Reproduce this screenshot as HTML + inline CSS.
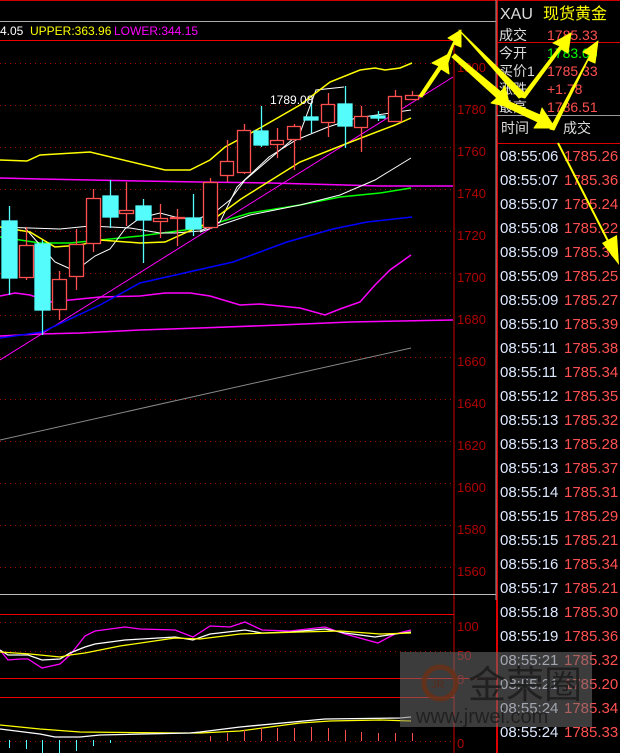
<!DOCTYPE html>
<html><head><meta charset="utf-8"><style>
html,body{margin:0;padding:0;background:#000;width:620px;height:753px;overflow:hidden}
svg{display:block}
text{font-family:"Liberation Sans","Noto Sans CJK SC",sans-serif}
</style></head><body>
<svg width="620" height="753" viewBox="0 0 620 753" xmlns="http://www.w3.org/2000/svg">
<rect width="620" height="753" fill="#000"/>
<line x1="0" y1="0.5" x2="620" y2="0.5" stroke="#c00" stroke-width="1"/>
<line x1="0" y1="21.5" x2="497" y2="21.5" stroke="#aaa" stroke-width="1"/>
<line x1="0" y1="40.5" x2="454" y2="40.5" stroke="#e00" stroke-width="1"/>
<line x1="454" y1="40" x2="454" y2="753" stroke="#c00" stroke-width="1"/>
<line x1="0" y1="594.5" x2="497" y2="594.5" stroke="#bbb" stroke-width="1"/>
<line x1="0" y1="614.5" x2="454" y2="614.5" stroke="#e00"/>
<line x1="0" y1="678.5" x2="497" y2="678.5" stroke="#e00"/>
<line x1="0" y1="697.5" x2="454" y2="697.5" stroke="#e00"/>
<line x1="497" y1="0" x2="497" y2="753" stroke="#d00" stroke-width="2"/>
<line x1="496" y1="0" x2="496" y2="600" stroke="#999" stroke-width="1"/>
<text x="0" y="35" font-size="12" fill="#fff">4.05</text>
<text x="30" y="35" font-size="12" fill="#ff0">UPPER:363.96</text>
<text x="114" y="35" font-size="12" fill="#f0f">LOWER:344.15</text>
<g stroke="#a00" stroke-dasharray="1,4" stroke-width="1">
<line x1="0" y1="63.5" x2="454" y2="63.5"/><line x1="0" y1="105.5" x2="454" y2="105.5"/>
<line x1="0" y1="147.5" x2="454" y2="147.5"/><line x1="0" y1="189.5" x2="454" y2="189.5"/>
<line x1="0" y1="231.5" x2="454" y2="231.5"/><line x1="0" y1="273.5" x2="454" y2="273.5"/>
<line x1="0" y1="315.5" x2="454" y2="315.5"/><line x1="0" y1="357.5" x2="454" y2="357.5"/>
<line x1="0" y1="399.5" x2="454" y2="399.5"/><line x1="0" y1="441.5" x2="454" y2="441.5"/>
<line x1="0" y1="483.5" x2="454" y2="483.5"/><line x1="0" y1="525.5" x2="454" y2="525.5"/>
<line x1="0" y1="567.5" x2="454" y2="567.5"/>
<line x1="0" y1="622.5" x2="454" y2="622.5"/><line x1="0" y1="651.5" x2="454" y2="651.5"/>
<line x1="0" y1="741.5" x2="454" y2="741.5"/>
</g>
<g font-size="13" fill="#b00000">
<text x="457" y="72">1800</text><text x="457" y="114">1780</text><text x="457" y="156">1760</text>
<text x="457" y="198">1740</text><text x="457" y="240">1720</text><text x="457" y="282">1700</text>
<text x="457" y="324">1680</text><text x="457" y="366">1660</text><text x="457" y="408">1640</text>
<text x="457" y="450">1620</text><text x="457" y="492">1600</text><text x="457" y="534">1580</text>
<text x="457" y="576">1560</text>
<text x="457" y="631">100</text><text x="457" y="660">50</text><text x="457" y="684">0</text><text x="457" y="748">0</text>
</g>
<g fill="none" stroke-width="1">
<polyline stroke="#888" points="0,440 411,348"/>
<polyline stroke="#f0f" points="0,360 453,77"/>
<polyline stroke="#f0f" stroke-width="1.5" points="0,336 40,334 80,333 140,330 200,328 280,325 350,322 453,320"/>
<polyline stroke="#f0f" stroke-width="1.5" points="0,178 40,179 140,181 200,182 270,183 345,185 380,186 453,186"/>
<polyline stroke="#f0f" stroke-width="1.5" points="0,296 15,293 30,295 50,302 70,300 100,297 140,296 165,293 190,293 210,296 240,305 260,304 300,308 325,315 340,309 360,302 375,285 390,270 411,255"/>
<polyline stroke="#00f" stroke-width="1.5" points="0,338 42,332 100,305 140,283 233,262 287,242 333,229 367,222 412,217"/>
<polyline stroke="#0f0" stroke-width="1.5" points="0,237 40,243 70,243 100,240 140,236 170,232 200,228 250,213 300,205 340,197 380,193 411,188"/>
<polyline stroke="#fff" points="200,232 250,215 300,205 340,195 375,180 411,158"/>
<polyline stroke="#fff" points="0,227 60,229 90,226 130,228 160,233 175,233 200,231 220,222 237,187 269,157 296,140 328,127 356,118 411,110"/>
<polyline stroke="#fff" points="25,228 40,245 55,262 75,271 95,256 110,249 125,229 140,218 160,213 175,217 195,220 215,212 230,200 245,180 300,133 316,90 344,87"/>
<polyline stroke="#ff0" stroke-width="1.5" points="0,160 27,161 40,155 90,152 165,170 190,170 210,160 225,147 260,128 300,105 330,82 360,70 375,68 385,70 400,68 412,63"/>
<polyline stroke="#ff0" stroke-width="1.5" points="0,227 30,232 55,247 80,245 100,240 140,243 165,242 185,233 210,222 241,199 300,162 348,143 395,125 411,118"/>
</g>
<g stroke-width="1.3">
<g stroke="#54fcfc" fill="#54fcfc">
<line x1="9.5" y1="206" x2="9.5" y2="295"/><rect x="2" y="221" width="15" height="57"/>
<line x1="42.5" y1="240" x2="42.5" y2="335"/><rect x="35" y="244" width="15" height="66"/>
<line x1="110.5" y1="180" x2="110.5" y2="228"/><rect x="103" y="196" width="15" height="21"/>
<line x1="143.5" y1="199" x2="143.5" y2="263"/><rect x="136" y="206" width="15" height="14"/>
<line x1="193.5" y1="194" x2="193.5" y2="236"/><rect x="186" y="218" width="15" height="11"/>
<line x1="261.5" y1="106" x2="261.5" y2="147"/><rect x="254" y="131" width="14" height="14"/>
<line x1="311.5" y1="103" x2="311.5" y2="133"/><rect x="304" y="117" width="14" height="3"/>
<line x1="345.5" y1="86" x2="345.5" y2="148"/><rect x="338" y="104" width="14" height="22"/>
<line x1="378.5" y1="111" x2="378.5" y2="121"/><rect x="371" y="116" width="14" height="2"/>
</g>
<g stroke="#ff5050" fill="#000">
<line x1="26.5" y1="227" x2="26.5" y2="280"/><rect x="19.5" y="245.5" width="14" height="32"/>
<line x1="59.5" y1="271" x2="59.5" y2="320"/><rect x="52.5" y="279.5" width="14" height="30"/>
<line x1="76.5" y1="229" x2="76.5" y2="290"/><rect x="69.5" y="244.5" width="14" height="32"/>
<line x1="93.5" y1="189" x2="93.5" y2="252"/><rect x="86.5" y="198.5" width="14" height="45"/>
<line x1="126.5" y1="182" x2="126.5" y2="226"/><rect x="119.5" y="210.5" width="14" height="3"/>
<line x1="160.5" y1="204" x2="160.5" y2="238"/><rect x="153.5" y="218.5" width="14" height="3"/>
<line x1="177.5" y1="209" x2="177.5" y2="246"/><rect x="170.5" y="217.5" width="14" height="1"/>
<line x1="210.5" y1="178" x2="210.5" y2="229"/><rect x="203.5" y="182.5" width="14" height="45"/>
<line x1="227.5" y1="140" x2="227.5" y2="182"/><rect x="220.5" y="161.5" width="13" height="14"/>
<line x1="244.5" y1="124" x2="244.5" y2="174"/><rect x="237.5" y="130.5" width="13" height="42"/>
<line x1="277.5" y1="128" x2="277.5" y2="158"/><rect x="270.5" y="140.5" width="13" height="4"/>
<line x1="294.5" y1="124" x2="294.5" y2="170"/><rect x="287.5" y="126.5" width="13" height="13"/>
<line x1="328.5" y1="93" x2="328.5" y2="137"/><rect x="321.5" y="104.5" width="13" height="18"/>
<line x1="361.5" y1="106" x2="361.5" y2="152"/><rect x="354.5" y="116.5" width="13" height="11"/>
<line x1="395.5" y1="90" x2="395.5" y2="122"/><rect x="388.5" y="96.5" width="13" height="25"/>
<line x1="412.5" y1="91" x2="412.5" y2="99"/><rect x="405.5" y="95.5" width="13" height="4"/>
</g>
</g>
<text x="270" y="104" font-size="12" fill="#fff">1789.08</text>
<g fill="none" stroke-width="1.3">
<polyline stroke="#f0f" points="0,650 8,660 20,659 28,659 42,668 60,664 70,655 85,636 95,631 125,627 140,629 175,630 193,637 210,626 230,627 245,622 262,630 290,631 325,627 345,634 378,643 395,634 411,630"/>
<polyline stroke="#fff" points="0,650 8,655 28,655 42,660 60,659 70,653 85,647 95,644 125,640 175,637 193,640 210,634 245,630 262,633 290,632 325,629 345,633 375,637 395,634 411,632"/>
<polyline stroke="#ff0" points="0,652 30,654 60,657 70,655 85,653 120,646 175,638 200,639 240,634 300,632 340,631 380,634 411,633"/>
<polyline stroke="#ff0" points="0,725 40,729 80,732 180,733 200,733 240,731 300,723 330,721 380,720 411,721"/>
<polyline stroke="#fff" points="0,729 40,734 55,737 80,737 100,735 190,733 200,732 240,727 325,719 400,718 411,717"/>
</g>
<g stroke="#54fcfc" stroke-width="1">
<line x1="9.5" y1="740" x2="9.5" y2="748"/><line x1="26.5" y1="740" x2="26.5" y2="749"/>
<line x1="42.5" y1="740" x2="42.5" y2="753"/><line x1="59.5" y1="740" x2="59.5" y2="753"/>
<line x1="76.5" y1="740" x2="76.5" y2="751"/><line x1="93.5" y1="740" x2="93.5" y2="746"/>
<line x1="110.5" y1="740" x2="110.5" y2="743"/>
</g>
<g stroke="#ff5050" stroke-width="1">
<line x1="210.5" y1="741" x2="210.5" y2="736"/><line x1="227.5" y1="741" x2="227.5" y2="733"/>
<line x1="244.5" y1="741" x2="244.5" y2="730"/><line x1="261.5" y1="741" x2="261.5" y2="728"/>
<line x1="277.5" y1="741" x2="277.5" y2="728"/><line x1="294.5" y1="741" x2="294.5" y2="728"/>
<line x1="311.5" y1="741" x2="311.5" y2="727"/><line x1="328.5" y1="741" x2="328.5" y2="728"/>
<line x1="345.5" y1="741" x2="345.5" y2="730"/><line x1="361.5" y1="741" x2="361.5" y2="732"/>
<line x1="378.5" y1="741" x2="378.5" y2="733"/><line x1="395.5" y1="741" x2="395.5" y2="733"/>
<line x1="412.5" y1="741" x2="412.5" y2="733"/>
</g>
<text x="500" y="19" font-size="16" fill="#ddd">XAU</text>
<text x="543" y="19" font-size="16" fill="#ff0">现货黄金</text>
<line x1="497" y1="42.5" x2="620" y2="42.5" stroke="#d00"/>
<line x1="497" y1="115.5" x2="620" y2="115.5" stroke="#999"/>
<line x1="497" y1="143.5" x2="620" y2="143.5" stroke="#d00"/>
<g font-size="14">
<text x="499" y="40" fill="#ddd">成交</text><text x="547" y="40" fill="#ff5050">1785.33</text>
<text x="499" y="58" fill="#ddd">今开</text><text x="547" y="58" fill="#0f0">1783.05</text>
<text x="499" y="76" fill="#ddd">买价1</text><text x="547" y="76" fill="#ff5050">1785.33</text>
<text x="499" y="94" fill="#ddd">涨跌</text><text x="547" y="94" fill="#ff5050">+1.78</text>
<text x="499" y="112" fill="#ddd">最高</text><text x="547" y="112" fill="#ff5050">1786.51</text>
<text x="501" y="133" fill="#ddd">时间</text><text x="563" y="133" fill="#ddd">成交</text>
</g>
<g font-size="15">
<g fill="#dde8ff">
<text x="500" y="161">08:55:06</text><text x="500" y="185">08:55:07</text><text x="500" y="209">08:55:07</text>
<text x="500" y="233">08:55:08</text><text x="500" y="257">08:55:09</text><text x="500" y="281">08:55:09</text>
<text x="500" y="305">08:55:09</text><text x="500" y="329">08:55:10</text><text x="500" y="353">08:55:11</text>
<text x="500" y="377">08:55:11</text><text x="500" y="401">08:55:12</text><text x="500" y="425">08:55:13</text>
<text x="500" y="449">08:55:13</text><text x="500" y="473">08:55:13</text><text x="500" y="497">08:55:14</text>
<text x="500" y="521">08:55:15</text><text x="500" y="545">08:55:15</text><text x="500" y="569">08:55:16</text>
<text x="500" y="593">08:55:17</text><text x="500" y="617">08:55:18</text><text x="500" y="641">08:55:19</text>
<text x="500" y="665">08:55:21</text><text x="500" y="689">08:55:21</text><text x="500" y="713">08:55:24</text>
<text x="500" y="737">08:55:24</text>
</g>
<g fill="#ff5050">
<text x="564" y="161">1785.26</text><text x="564" y="185">1785.36</text><text x="564" y="209">1785.24</text>
<text x="564" y="233">1785.22</text><text x="564" y="257">1785.30</text><text x="564" y="281">1785.25</text>
<text x="564" y="305">1785.27</text><text x="564" y="329">1785.39</text><text x="564" y="353">1785.38</text>
<text x="564" y="377">1785.34</text><text x="564" y="401">1785.35</text><text x="564" y="425">1785.32</text>
<text x="564" y="449">1785.28</text><text x="564" y="473">1785.37</text><text x="564" y="497">1785.31</text>
<text x="564" y="521">1785.29</text><text x="564" y="545">1785.21</text><text x="564" y="569">1785.34</text>
<text x="564" y="593">1785.21</text><text x="564" y="617">1785.30</text><text x="564" y="641">1785.36</text>
<text x="564" y="665">1785.32</text><text x="564" y="689">1785.20</text><text x="564" y="713">1785.34</text>
<text x="564" y="737">1785.33</text>
</g>
</g>
<rect x="400" y="652" width="192" height="75" fill="rgba(110,110,110,0.55)"/>
<circle cx="440" cy="683" r="16" fill="none" stroke="#6a3018" stroke-width="5" opacity="0.85"/>
<text x="431" y="688" font-size="11" fill="#5a2a18">JR</text>
<text x="468" y="698" font-size="38" fill="#1e1e1e" opacity="0.9">金荣圈</text>
<text x="416" y="723" font-size="20" fill="#1e1e1e" opacity="0.9">www.jrwei.com</text>
<g fill="#ff0" stroke="#ff0" stroke-linejoin="round" stroke-width="1">
<polygon points="419,96 422,97 441,69 449,74 447,55 432,63 439,66"/>
<polygon points="443,64 447,66 454,44 461,47 461,30 448,38 454,41"/>
<polygon points="459,30 462,33 526,95 519,98"/>
<polygon points="521,97 525,98 561,49 568,53 571,33 553,43 560,46"/>
<polygon points="452,57 455,54 501,92 505,86 510,107 491,103 497,98"/>
<polygon points="500,104 503,99 540,115 542,108 555,128 534,128 538,122"/>
<polygon points="550,129 554,130 588,60 595,63 598,41 583,52 590,55"/>
</g>
<line x1="558" y1="143" x2="610" y2="245" stroke="#ff0" stroke-width="2"/>
<polygon points="602,243 617,235 619,265" fill="#ff0"/>
</svg>
</body></html>
